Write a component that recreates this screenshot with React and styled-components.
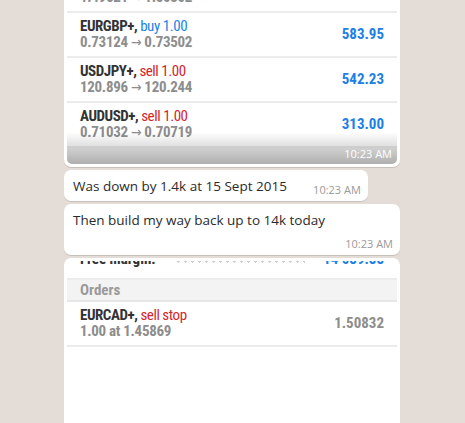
import React from "react";
import styled, { createGlobalStyle } from "styled-components";

const Global = createGlobalStyle`
  html, body { margin: 0; padding: 0; }
  body {
    background: #e4ddd7;
    overflow: hidden;
    font-family: "Open Sans", "Liberation Sans", sans-serif;
  }
`;

const Page = styled.div`
  height: 423px;
  overflow: hidden;
  padding-left: 64px;
`;

const Thread = styled.div`
  width: 336px;
  margin-top: -35px;
  display: flex;
  flex-direction: column;
  align-items: flex-start;
  gap: 3px;
`;

const ImageBubble = styled.div`
  width: 100%;
  box-sizing: border-box;
  padding: 3px;
  background: #fff;
  border-radius: 7px;
  box-shadow: 0 1px 0.5px rgba(0, 0, 0, 0.13);
  height: ${(p) => (p.$tall ? "200px" : "auto")};
`;

const Shot = styled.div`
  position: relative;
  overflow: hidden;
  border-radius: 5px;
  background: #fff;
  height: 100%;
  font-family: Roboto, "Liberation Sans", sans-serif;
  font-stretch: 80%;
`;

const List = styled.div`
  margin-top: ${(p) => p.$offset || 0}px;
`;

const Row = styled.div`
  display: flex;
  align-items: center;
  justify-content: space-between;
  padding: 5px 13px 6px;
  border-bottom: 2px solid #ececec;
  line-height: 16px;
  font-size: 15px;
  font-weight: 700;
`;

const Name = styled.div`
  color: #333;
  letter-spacing: -0.45px;
`;

const Side = styled.span`
  font-weight: 400;
  color: ${(p) => (p.$sell ? "#d4252b" : "#2283e6")};
`;

const Prices = styled.div`
  color: #8d8d8d;
  letter-spacing: -0.3px;
`;

const Arrow = styled.span`
  font-family: "DejaVu Sans", sans-serif;
  font-weight: 400;
  font-size: 14px;
  line-height: 0;
`;

const Value = styled.div`
  color: ${(p) => (p.$muted ? "#8d8d8d" : "#1c7fe6")};
  font-size: 15px;
`;

const Filler = styled.div`
  height: 16px;
  background: #f2f2f2;
`;

const Shade = styled.div`
  position: absolute;
  left: 0;
  right: 0;
  bottom: 0;
  height: 32px;
  background: linear-gradient(to bottom, rgba(0, 0, 0, 0), rgba(0, 0, 0, 0.28));
`;

const ShotTime = styled.span`
  position: absolute;
  right: 5px;
  bottom: 3px;
  color: #fff;
  font-family: "Open Sans", "Liberation Sans", sans-serif;
  font-stretch: normal;
  font-size: 11px;
  line-height: 15px;
`;

const MarginRow = styled.div`
  display: flex;
  align-items: flex-end;
  gap: 8px;
  padding: 1px 13px 11px;
  border-bottom: 2px solid #ececec;
  line-height: 16px;
  font-size: 15px;
  font-weight: 700;
  color: #333;
`;

const Leader = styled.div`
  flex: 1;
  height: 3px;
  margin: 0 10px 4px 12px;
  background-image: radial-gradient(circle, #cfcfcf 1px, transparent 1.3px);
  background-size: 7px 3px;
`;

const Section = styled.div`
  background: #f3f3f3;
  border-bottom: 2px solid #e6e6e6;
  padding: 0 13px;
  line-height: 20px;
  font-size: 15px;
  font-weight: 700;
  color: #9a9a9a;
`;

const TextBubble = styled.div`
  position: relative;
  max-width: 100%;
  box-sizing: border-box;
  padding: 6px 7px 5px 9px;
  background: #fff;
  border-radius: 7px;
  box-shadow: 0 1px 0.5px rgba(0, 0, 0, 0.13);
  font-size: 13.5px;
  line-height: 20px;
  color: #2b2b2b;
`;

const Spacer = styled.span`
  display: inline-block;
  width: 74px;
`;

const Time = styled.span`
  position: absolute;
  right: 7px;
  bottom: 4px;
  font-size: 11px;
  line-height: 15px;
  color: #9a9a9a;
`;

const trades = [
  { pair: "GBPUSD+", side: "buy", lots: "1.00", from: "1.49621", to: "1.50302", value: "1 021.50" },
  { pair: "EURGBP+", side: "buy", lots: "1.00", from: "0.73124", to: "0.73502", value: "583.95" },
  { pair: "USDJPY+", side: "sell", lots: "1.00", from: "120.896", to: "120.244", value: "542.23" },
  { pair: "AUDUSD+", side: "sell", lots: "1.00", from: "0.71032", to: "0.70719", value: "313.00" },
];

function TradeRow({ pair, side, lots, from, to, value }) {
  return (
    <Row>
      <div>
        <Name>
          {pair}, <Side $sell={side === "sell"}>{side} {lots}</Side>
        </Name>
        <Prices>
          {from} <Arrow>→</Arrow> {to}
        </Prices>
      </div>
      <Value>{value}</Value>
    </Row>
  );
}

function Message({ text, time }) {
  return (
    <TextBubble>
      {text}
      <Spacer />
      <Time>{time}</Time>
    </TextBubble>
  );
}

export default function App() {
  return (
    <Page>
      <Global />
      <Thread>
        <ImageBubble>
          <Shot>
            <List>
              {trades.map((t) => (
                <TradeRow key={t.pair} {...t} />
              ))}
            </List>
            <Filler />
            <Shade />
            <ShotTime>10:23 AM</ShotTime>
          </Shot>
        </ImageBubble>
        <Message text="Was down by 1.4k at 15 Sept 2015" time="10:23 AM" />
        <Message text="Then build my way back up to 14k today" time="10:23 AM" />
        <ImageBubble $tall>
          <Shot>
            <List $offset={-11}>
              <MarginRow>
                <span>Free margin:</span>
                <Leader />
                <Value>14 089.88</Value>
              </MarginRow>
              <Section>Orders</Section>
              <Row>
                <div>
                  <Name>
                    EURCAD+, <Side $sell>sell stop</Side>
                  </Name>
                  <Prices>1.00 at 1.45869</Prices>
                </div>
                <Value $muted>1.50832</Value>
              </Row>
            </List>
          </Shot>
        </ImageBubble>
      </Thread>
    </Page>
  );
}
